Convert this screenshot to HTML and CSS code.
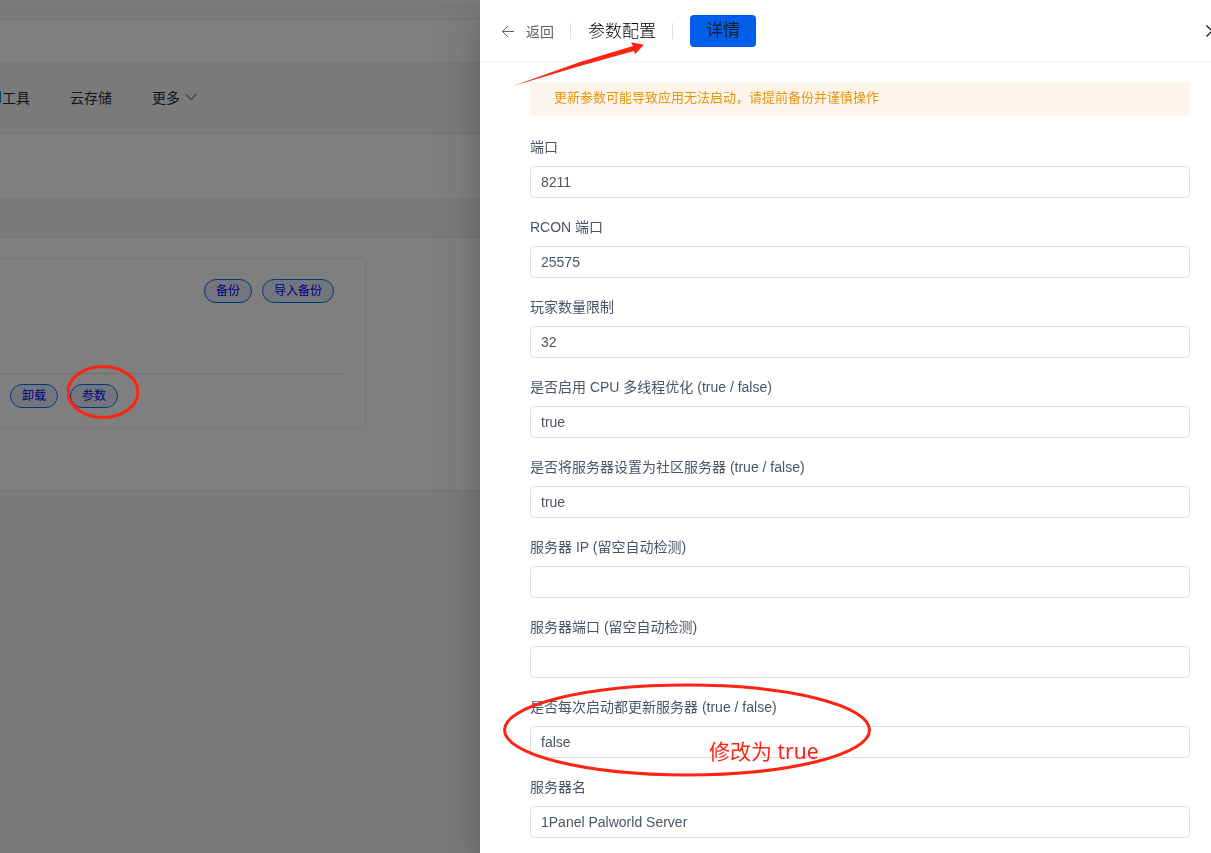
FILE: index.html
```html
<!DOCTYPE html>
<html lang="zh-CN">
<head>
    <meta charset="UTF-8">
    <meta name="viewport" content="width=device-width, initial-scale=1.0">
    <title>参数配置</title>
    <link rel="stylesheet" href="styles.css">
</head>
<body>
    <div class="page">
        <div class="top-strip"></div>
        <div class="toolbar"></div>
        <nav class="nav">
            <a href="#"><span class="active"></span>工具</a>
            <a href="#">云存储</a>
            <a href="#" class="more">更多
                <svg width="12" height="12" viewBox="0 0 12 12" fill="none" stroke="currentColor"><path d="M1 3.5l5 5 5-5"/></svg>
            </a>
        </nav>
        <div class="filter"></div>
        <div class="band"></div>
        <main class="apps">
            <div class="card">
                <div class="card-top">
                    <button type="button" class="pill">备份</button>
                    <button type="button" class="pill">导入备份</button>
                </div>
                <div class="card-bottom">
                    <button type="button" class="pill">卸载</button>
                    <button type="button" class="pill">参数</button>
                </div>
            </div>
        </main>
    </div>

    <div class="overlay">
        <section class="drawer">
            <header class="drawer-header">
                <button type="button" class="back">
                    <svg width="14" height="14" viewBox="0 0 14 14" fill="none" stroke="currentColor"><path d="M13 7.5H1.500M7 2L1.500 7.500 7 13"/></svg>
                    返回
                </button>
                <span class="divider"></span>
                <h1>参数配置</h1>
                <span class="divider"></span>
                <button type="button" class="primary">详情</button>
                <button type="button" class="close" aria-label="关闭">
                    <svg width="12" height="12" viewBox="0 0 12 12" fill="none" stroke="currentColor" stroke-width="1.200"><path d="M.5.5l11 11M11.500.5l-11 11"/></svg>
                </button>
            </header>
            <form class="drawer-body">
                <div class="alert">更新参数可能导致应用无法启动，请提前备份并谨慎操作</div>

                <label for="port">端口</label>
                <input type="text" id="port" value="8211">

                <label for="rcon">RCON 端口</label>
                <input type="text" id="rcon" value="25575">

                <label for="players">玩家数量限制</label>
                <input type="text" id="players" value="32">

                <label for="threads">是否启用 CPU 多线程优化 (true / false)</label>
                <input type="text" id="threads" value="true">

                <label for="community">是否将服务器设置为社区服务器 (true / false)</label>
                <input type="text" id="community" value="true">

                <label for="ip">服务器 IP (留空自动检测)</label>
                <input type="text" id="ip">

                <label for="publicPort">服务器端口 (留空自动检测)</label>
                <input type="text" id="publicPort">

                <label for="update">是否每次启动都更新服务器 (true / false)</label>
                <input type="text" id="update" value="false">

                <label for="name">服务器名</label>
                <input type="text" id="name" value="1Panel Palworld Server">
            </form>
        </section>
    </div>

    <!-- red marks over the page -->
    <svg class="mark mark-arrow" width="134" height="46" viewBox="0 0 134 46"><path d="M1 45L68 21 121 5 119 1.300 132 3.700 123 13.300 122 10 68 25z" fill="#ff2313"/></svg>
    <svg class="mark mark-params" width="72" height="54" viewBox="0 0 72 54" fill="none" stroke="#ff2313" stroke-width="3"><ellipse cx="36" cy="27" rx="35" ry="25.500"/></svg>
    <svg class="mark mark-update" width="368" height="94" viewBox="0 0 368 94" fill="none" stroke="#ff2313" stroke-width="3"><ellipse cx="184" cy="47" rx="182.500" ry="45"/></svg>
    <div class="mark mark-note">修改为 true</div>
</body>
</html>
```
FILE: styles.css
```css
* {
    box-sizing: border-box;
}
body {
    margin: 0;
    height: 100vh;
    overflow: hidden;
    font-family: "Liberation Sans", "Noto Sans CJK SC", sans-serif;
    font-size: 14px;
    color: #4c5464;
    background-color: #f4f4f4;
}
button, input {
    font: inherit;
}
svg {
    display: block;
    flex: none;
}

/* page behind the drawer */
.top-strip {
    height: 20px;
    border-top: 1px solid #fff;
    border-bottom: 1px solid #e4e7ed;
}
.toolbar {
    height: 43px;
    background: #fff;
    border-bottom: 1px solid #e4e7ed;
}
.nav {
    display: flex;
    align-items: center;
    gap: 40px;
    height: 71px;
    padding-bottom: 2px;
    border-bottom: 1px solid #e4e4e4;
}
.nav a {
    display: flex;
    align-items: center;
    color: #1f2f3d;
    text-decoration: none;
}
.nav .active {
    width: 1px;
    height: 12px;
    margin-right: 1px;
    background: #1890d0;
}
.nav .more {
    gap: 5px;
}
.filter {
    height: 64px;
    background: #fff;
}
.band {
    height: 40px;
    border-bottom: 1px solid #ececec;
}
.apps {
    height: 253px;
    padding-top: 20px;
    background: #fff;
    border-bottom: 1px solid #e4e7ed;
}
.card {
    display: flex;
    flex-direction: column;
    justify-content: space-between;
    width: 366px;
    height: 170px;
    padding: 20px 21px 19px 0;
    border: 1px solid #ebeef5;
    border-left: 0;
    border-radius: 0 4px 4px 0;
    box-shadow: 0 0 4px rgba(0, 0, 0, 0.06);
}
.card-top {
    display: flex;
    justify-content: flex-end;
    gap: 10px;
    padding-right: 10px;
}
.card-bottom {
    display: flex;
    gap: 12px;
    padding: 10px 0 0 10px;
    border-top: 1px solid #e4e4e4;
}
.pill {
    height: 24px;
    padding: 0 11px;
    font-size: 12px;
    line-height: 22px;
    color: #0000ff;
    background: #e6eefb;
    border: 1px solid #0072ee;
    border-radius: 12px;
}

/* drawer */
.overlay {
    position: fixed;
    inset: 0;
    display: flex;
    padding-left: 480px;
    background: rgba(0, 0, 0, 0.5);
}
.drawer {
    flex: 1;
    min-width: 0;
    overflow: hidden;
    background: #fff;
    box-shadow: 0 16px 48px 16px rgba(0, 0, 0, 0.08), 0 12px 32px rgba(0, 0, 0, 0.12), 0 8px 16px -8px rgba(0, 0, 0, 0.16);
}
.drawer-header {
    display: flex;
    align-items: center;
    height: 62px;
    padding-left: 21px;
    border-bottom: 1px solid #f0f0f0;
}
.drawer-header h1 {
    margin: 0;
    padding-bottom: 2px;
    font-size: 17px;
    font-weight: 300;
    color: #000;
}
.back {
    display: flex;
    align-items: center;
    gap: 11px;
    padding: 0;
    color: #5c5f66;
    background: none;
    border: 0;
}
.divider {
    width: 1px;
    height: 16px;
    margin: 0 17px 0 16px;
    background: #dcdfe6;
}
.primary {
    height: 32px;
    padding: 0 16px;
    font-size: 17px;
    line-height: 32px;
    color: #1f1f1f;
    background: #005eeb;
    border: 0;
    border-radius: 4px;
}
.close {
    margin: 0 -7px 0 auto;
    padding: 0;
    color: #000;
    background: none;
    border: 0;
}
.drawer-body {
    padding: 20px 21px 0 50px;
}
.alert {
    height: 34px;
    margin-bottom: 20px;
    padding: 0 24px;
    font-size: 13px;
    line-height: 32px;
    color: #e6960a;
    background: #fdf5eb;
    border-radius: 4px;
}
label {
    display: block;
    margin-bottom: 8px;
    line-height: 22px;
}
input {
    display: block;
    width: 100%;
    height: 32px;
    margin-bottom: 18px;
    padding: 0 10px;
    color: #4c5464;
    background: #fff;
    border: 1px solid #dcdfe6;
    border-radius: 4px;
}

/* marks */
.mark {
    position: absolute;
    pointer-events: none;
}
.mark-arrow {
    left: 512px;
    top: 41px;
}
.mark-params {
    left: 67px;
    top: 365px;
}
.mark-update {
    left: 503px;
    top: 683px;
}
.mark-note {
    left: 709px;
    top: 736px;
    font-family: "Noto Sans", "Noto Sans CJK SC", sans-serif;
    font-size: 21px;
    line-height: 30px;
    color: #ff2313;
}
```
